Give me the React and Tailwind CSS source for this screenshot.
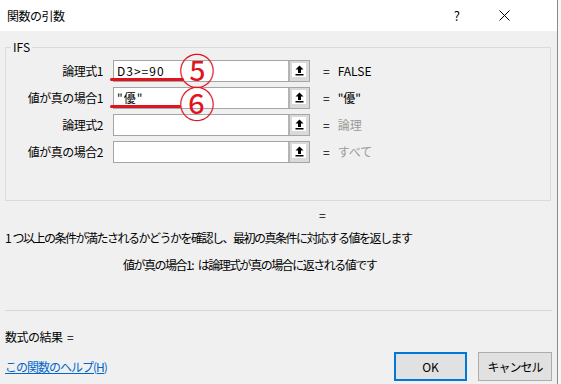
import React from 'react';

const font = "font-['Noto_Sans_CJK_JP','Noto_Sans',sans-serif]";

const UpArrow = () => (
  <svg width="9" height="11" viewBox="0 0 9 11">
    <path d="M4.5 0.5 L8.5 4.5 L6 4.5 L6 8 L3 8 L3 4.5 L0.5 4.5 Z" fill="#000" />
    <rect x="0.5" y="9" width="8" height="1.5" fill="#000" />
  </svg>
);

const ArgRow = ({ label, value, result, muted }) => (
  <div className="flex items-center h-[22px]">
    <div className="w-[97px] text-right text-[12px] text-[#000] tracking-[-0.5px]">{label}</div>
    <div className="ml-[10px] flex h-[22px] w-[197px] border border-[#a5a5a5] bg-white">
      <div className="flex-1 flex items-center pl-[3px] text-[12px] tracking-[1px] text-black">{value}</div>
      <div className="w-[21px] h-full border-l-2 border-[#b4b4b4] bg-[#dadada] p-[2px]">
        <div className="w-[14px] h-[14px] bg-white flex items-center justify-center">
          <UpArrow />
        </div>
      </div>
    </div>
    <div className="ml-[13px] text-[12px] text-black">=</div>
    <div className={`ml-[8px] text-[12px] ${muted ? 'text-[#9a9a9a]' : 'text-black'}`}>{result}</div>
  </div>
);

export default function App() {
  return (
    <div className={`${font} w-[561px] h-[384px] bg-[#f7f7f7] overflow-hidden`}>
      <div className="w-[558px] h-[384px] bg-[#f0f0f0] border-r border-[#8a8a8a] flex flex-col">
        {/* title bar */}
        <div className="h-[31px] bg-white flex items-center pl-[7px] text-[12px] text-black">
          <span className="tracking-[-0.5px]">関数の引数</span>
          <span className="ml-auto mr-[39px] text-[13px]">?</span>
          <svg className="mr-[47px]" width="11" height="11" viewBox="0 0 11 11">
            <path d="M0.5 0.5 L10.5 10.5 M10.5 0.5 L0.5 10.5" stroke="#000" strokeWidth="1" />
          </svg>
        </div>

        {/* group box */}
        <fieldset className="mx-[5px] mt-[8px] w-[546px] h-[162px] border border-[#dadada] px-0 pt-[5px]">
          <legend className="ml-[5px] px-[2px] text-[12px] leading-[16px] text-black">IFS</legend>
          <div className="relative flex flex-col gap-[5px]">
            <ArgRow label="論理式1" value="D3>=90" result="FALSE" />
            <ArgRow label="値が真の場合1" value={'"優"'} result={'"優"'} />
            <ArgRow label="論理式2" value="" result="論理" muted />
            <ArgRow label="値が真の場合2" value="" result="すべて" muted />
            {/* red annotations */}
            <div className="absolute left-[104px] top-[18px] w-[74px] h-[3px] rounded-full bg-[#e0141e]" />
            <div className="absolute left-[104px] top-[45px] w-[71px] h-[3px] rounded-full bg-[#e0141e]" />
            <div className="absolute left-[173px] top-[-9px] text-[36px] leading-[36px] text-[#e0141e]">⑤</div>
            <div className="absolute left-[173px] top-[24px] text-[36px] leading-[36px] text-[#e0141e]">⑥</div>
          </div>
        </fieldset>

        <div className="mt-[6px] pl-[319px] text-[12px] leading-[16px] text-black">=</div>
        <div className="mt-[7px] pl-[5px] text-[12px] leading-[16px] tracking-[-1.5px] text-black whitespace-pre">
          1  つ以上の条件が満たされるかどうかを確認し、最初の真条件に対応する値を返します
        </div>
        <div className="mt-[11px] pl-[123px] text-[12px] leading-[16px] tracking-[-1.5px] text-black whitespace-pre">
          値が真の場合1:    は論理式が真の場合に返される値です
        </div>

        <div className="mt-[37px] mx-[5px] h-px bg-[#d7d7d7]" />

        <div className="mt-[18px] pl-[5px] text-[12px] leading-[16px] text-black tracking-[-0.5px] whitespace-pre">数式の結果  =</div>

        <div className="mt-[7px] flex items-center pl-[5px]">
          <span className="text-[12px] text-[#0066cc] underline tracking-[-1px]">この関数のヘルプ(H)</span>
          <button className="ml-auto w-[73px] h-[29px] border-2 border-[#0078d7] bg-[#e1e1e1] text-[12px] text-black">OK</button>
          <button className="ml-[11px] mr-[5px] w-[74px] h-[29px] border border-[#adadad] bg-[#e1e1e1] text-[12px] text-black tracking-[-1px]">キャンセル</button>
        </div>
      </div>
    </div>
  );
}
